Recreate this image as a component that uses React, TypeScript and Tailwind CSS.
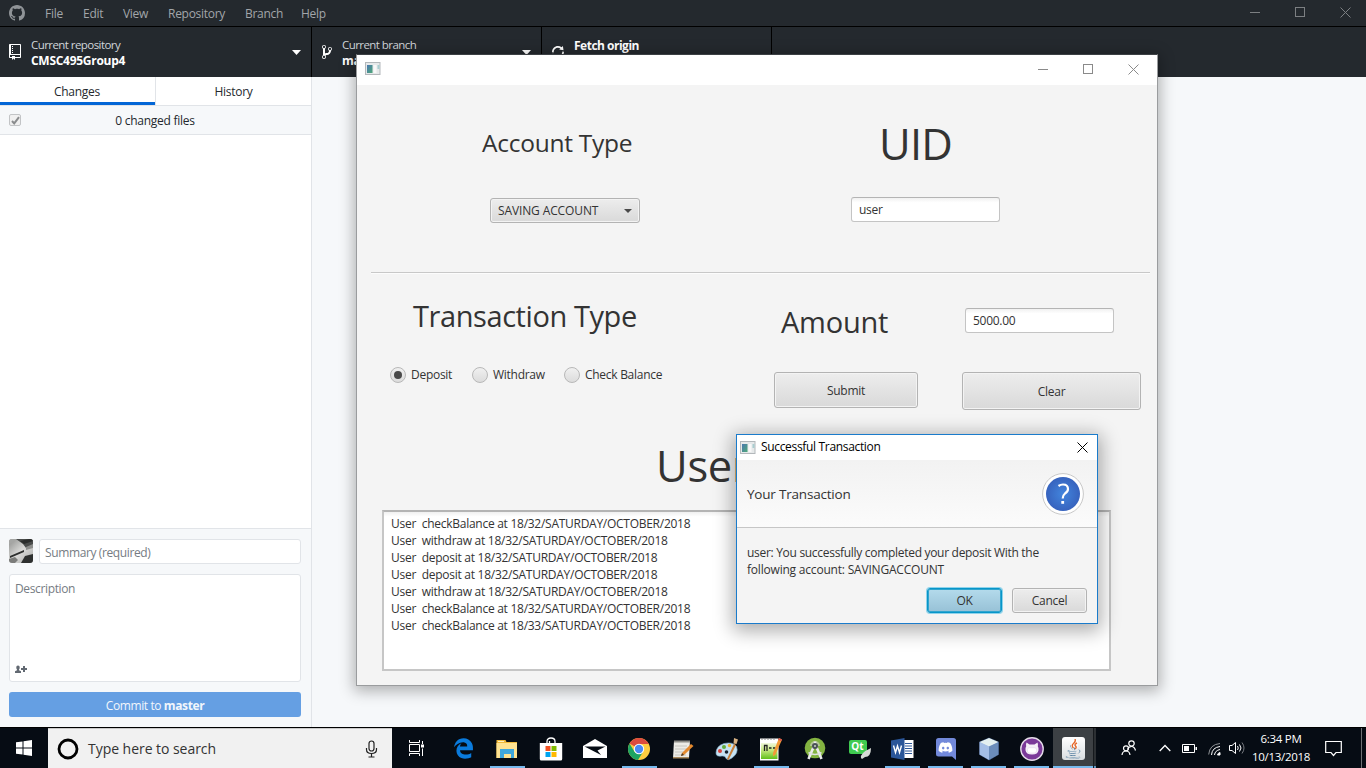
import React from 'react';
import { FaEdgeLegacy, FaDiscord, FaJava } from 'react-icons/fa';

const OCTOCAT =
  'M8 0C3.58 0 0 3.58 0 8c0 3.54 2.29 6.53 5.47 7.59.4.07.55-.17.55-.38 0-.19-.01-.82-.01-1.49-2.01.37-2.53-.49-2.69-.94-.09-.23-.48-.94-.82-1.13-.28-.15-.68-.52-.01-.53.63-.01 1.08.58 1.23.82.72 1.21 1.87.87 2.33.66.07-.52.28-.87.51-1.07-1.78-.2-3.64-.89-3.64-3.95 0-.87.31-1.59.82-2.15-.08-.2-.36-1.02.08-2.12 0 0 .67-.21 2.2.82.64-.18 1.32-.27 2-.27.68 0 1.36.09 2 .27 1.53-1.04 2.2-.82 2.2-.82.44 1.1.16 1.92.08 2.12.51.56.82 1.27.82 2.15 0 3.07-1.87 3.75-3.65 3.95.29.25.54.73.54 1.48 0 1.07-.01 1.93-.01 2.2 0 .21.15.46.55.38A8.013 8.013 0 0 0 16 8c0-4.42-3.58-8-8-8z';

function WindowControls({ className }: { className: string }) {
  return (
    <div className={`flex items-center ${className}`}>
      <svg width="10" height="10" viewBox="0 0 10 10" stroke="currentColor" fill="none"><path d="M0 5.5h10" /></svg>
      <svg width="10" height="10" viewBox="0 0 10 10" stroke="currentColor" fill="none"><rect x=".5" y=".5" width="9" height="9" /></svg>
      <svg width="11" height="11" viewBox="0 0 11 11" stroke="currentColor" fill="none"><path d="M.5.5l10 10M10.5.5l-10 10" /></svg>
    </div>
  );
}

function AppIcon() {
  return (
    <svg width="16" height="13" viewBox="0 0 16 13">
      <defs>
        <linearGradient id="frameFill" x1="0" y1="0" x2="1" y2="1">
          <stop offset="0" stopColor="#4a78b0" />
          <stop offset="1" stopColor="#4fa878" />
        </linearGradient>
      </defs>
      <rect x=".5" y=".5" width="14.500" height="12" fill="#e6e9ea" stroke="#b3b8bb" />
      <rect x="2" y="3" width="5.500" height="8" fill="url(#frameFill)" />
      <rect x="8.500" y="3" width="3" height="8" fill="#f8f8f8" />
      <rect x="12.500" y="3" width="2" height="4" fill="#a9cdd0" />
    </svg>
  );
}

function MenuBar() {
  return (
    <div className="flex h-[27px] items-center border-b border-black bg-[#24292e] text-[#a2a6aa]">
      <svg className="ml-[9px] text-[#8f9397]" width="16" height="16" viewBox="0 0 16 16" fill="currentColor"><path d={OCTOCAT} /></svg>
      <div className="ml-5 flex gap-5 pt-0.5 text-xs tracking-[-0.28px]">
        <span className="w-[18px]">File</span>
        <span className="w-5">Edit</span>
        <span className="w-[25px]">View</span>
        <span className="w-[57px]">Repository</span>
        <span className="w-9">Branch</span>
        <span>Help</span>
      </div>
      <WindowControls className="mr-[15px] ml-auto gap-[35px] pb-0.5 text-[#7c7f82]" />
    </div>
  );
}

function Caret() {
  return <svg width="9" height="5" viewBox="0 0 9 5" fill="currentColor"><path d="M0 0h9L4.5 5z" /></svg>;
}

function Toolbar() {
  return (
    <div className="flex h-[50px] bg-[#24292e] text-white">
      <div className="flex w-[312px] items-center border-r border-black pr-[10px] pl-[9px]">
        <svg width="12" height="16" viewBox="0 0 12 16" fill="currentColor">
          <path fillRule="evenodd" d="M4 9H3V8h1v1zm0-3H3v1h1V6zm0-2H3v1h1V4zm0-2H3v1h1V2zm8-1v12c0 .55-.45 1-1 1H6v2l-1.5-1.5L3 16v-2H1c-.55 0-1-.45-1-1V1c0-.55.45-1 1-1h10c.55 0 1 .45 1 1zm-1 10H1v2h2v-1h3v1h5v-2zm0-10H2v9h9V1z" />
        </svg>
        <div className="ml-[10px] flex-1 pt-0.5 leading-4">
          <div className="text-[11.500px] tracking-[-0.56px] text-[#d1d5da]">Current repository</div>
          <div className="text-xs font-bold tracking-[-0.28px]">CMSC495Group4</div>
        </div>
        <Caret />
      </div>
      <div className="flex w-[230px] items-center border-r border-black pr-[10px] pl-[10px]">
        <svg width="10" height="16" viewBox="0 0 10 16" fill="currentColor">
          <path fillRule="evenodd" d="M10 5c0-1.11-.89-2-2-2a1.993 1.993 0 0 0-1 3.72v.3c-.02.52-.23.98-.63 1.38-.4.4-.86.61-1.38.63-.83.02-1.48.16-2 .45V4.72a1.993 1.993 0 0 0-1-3.72C.88 1 0 1.89 0 3a2 2 0 0 0 1 1.72v6.56c-.59.35-1 .99-1 1.72 0 1.11.89 2 2 2 1.11 0 2-.89 2-2 0-.53-.2-1-.53-1.36.09-.06.48-.41.59-.47.25-.11.56-.17.94-.17 1.05-.05 1.95-.45 2.75-1.25S8.95 7.77 9 6.73h-.02C9.59 6.37 10 5.73 10 5zM2 1.8c.66 0 1.2.55 1.2 1.2 0 .65-.55 1.2-1.2 1.2C1.35 4.2.8 3.65.8 3c0-.65.55-1.2 1.2-1.2zm0 12.41c-.66 0-1.2-.55-1.2-1.2 0-.65.55-1.2 1.2-1.2.65 0 1.2.55 1.2 1.2 0 .65-.55 1.2-1.2 1.2zm6-8c-.66 0-1.2-.55-1.2-1.2 0-.65.55-1.2 1.2-1.2.65 0 1.2.55 1.2 1.2 0 .65-.55 1.2-1.2 1.2z" />
        </svg>
        <div className="ml-[10px] flex-1 pt-0.5 leading-4">
          <div className="text-[11.500px] tracking-[-0.56px] text-[#d1d5da]">Current branch</div>
          <div className="text-xs font-bold tracking-[-0.28px]">master</div>
        </div>
        <Caret />
      </div>
      <div className="flex w-[230px] items-center border-r border-black pl-[10px]">
        <svg width="12" height="16" viewBox="0 0 12 16" fill="currentColor">
          <path fillRule="evenodd" d="M10.24 7.4a4.15 4.15 0 0 1-1.2 3.6 4.346 4.346 0 0 1-5.41.54L4.8 10.4.5 9.8l.6 4.2 1.31-1.26c2.36 1.74 5.7 1.57 7.84-.54a5.876 5.876 0 0 0 1.74-4.46l-1.75-.34zM2.96 5a4.346 4.346 0 0 1 5.41-.54L7.2 5.6l4.3.6-.6-4.2-1.31 1.26c-2.36-1.74-5.7-1.57-7.85.54C.5 5.03-.06 6.65.01 8.26l1.75.35A4.17 4.17 0 0 1 2.96 5z" />
        </svg>
        <div className="ml-[10px] pt-1 leading-4">
          <div className="text-xs font-bold tracking-[-0.5px]">Fetch origin</div>
          <div className="text-[11px] text-[#d1d5da]">&nbsp;</div>
        </div>
      </div>
    </div>
  );
}

function Avatar() {
  return (
    <svg width="24" height="24" viewBox="0 0 24 24" className="rounded-[3px]">
      <defs>
        <linearGradient id="deskFill" x1="0" y1="0" x2="1" y2="1"><stop offset="0" stopColor="#8e8f8d" /><stop offset=".5" stopColor="#dadad8" /><stop offset="1" stopColor="#a9aaa8" /></linearGradient>
      </defs>
      <rect width="24" height="24" fill="url(#deskFill)" />
      <path d="M0 0h8L4 4 0 5z" fill="#a5a6a4" />
      <path d="M7 0h17v8l-7 1-3-4z" fill="#4a4c4b" />
      <path d="M11 2l9-2h4v2l-9 3z" fill="#2b2d2c" />
      <path d="M17 8l7-3v4l-7 2z" fill="#8d8e8c" />
      <path d="M1 17l14-6v2L1 19z" fill="#2d2f2e" />
      <path d="M12 24l4-7 8-2v9z" fill="#2e302f" />
      <path d="M0 24v-4l6-2 3 3-3 3z" fill="#7b7c7a" />
    </svg>
  );
}

function Sidebar() {
  return (
    <div className="flex w-[312px] flex-col border-r border-[#e1e4e8] bg-white text-xs tracking-[-0.26px] text-[#24292e]">
      <div className="flex h-[29px] border-b border-[#e1e4e8] text-center leading-[29px]">
        <div className="w-[155px] border-b-[3px] border-[#0366d6] pr-px">Changes</div>
        <div className="flex-1 border-l border-[#e1e4e8]">History</div>
      </div>
      <div className="flex h-[29px] items-center border-b border-[#e1e4e8] bg-[#f6f8fa] pl-[9px]">
        <div className="flex size-3 items-center justify-center rounded-[2px] border border-[#c2c4c6] bg-[#f0f0f0]">
          <svg width="9" height="9" viewBox="0 0 9 9" fill="none" stroke="#8a8c8e" strokeWidth="2"><path d="M1 5l2.2 2.4L8 1.2" /></svg>
        </div>
        <div className="flex-1 pt-0.5 pr-[22px] text-center">0 changed files</div>
      </div>
      <div className="flex-1" />
      <div className="h-[199px] border-t border-[#e1e4e8] bg-[#f6f8fa] px-[9px] pt-[10px] text-[#767c83]">
        <div className="flex w-[292px] gap-1.5">
          <Avatar />
          <div className="h-[25px] flex-1 rounded-[3px] border border-[#e1e4e8] bg-white pl-[5px] leading-[26px] tracking-[-0.38px]">Summary (required)</div>
        </div>
        <div className="mt-[10px] flex h-[108px] w-[292px] flex-col justify-between rounded-[3px] border border-[#e1e4e8] bg-white px-[5px] pt-[5px] pb-[7px]">
          <div className="leading-[18px] tracking-[-0.36px]">Description</div>
          <svg width="13" height="9" viewBox="0 0 13 9" fill="#626972">
            <path d="M3 .5C4.200 .5 4.700 1.400 4.700 2.500S4.300 4.200 4 4.600v.7l2 .9V8H0V6.200l2-.9v-.7C1.700 4.200 1.300 3.600 1.300 2.500S1.800.5 3 .5z" />
            <path d="M8 1h2v2h2v2h-2v2H8V5H6V3h2z" />
          </svg>
        </div>
        <div className="mt-[10px] h-[25px] w-[292px] rounded-[3px] bg-[#659fe3] text-center leading-[27px] tracking-[-0.4px] text-[#f1f6fc]">Commit to <b>master</b></div>
      </div>
    </div>
  );
}

function TextInput({ children }: { children: React.ReactNode }) {
  return (
    <div className="h-[25px] w-[149px] rounded-[3px] border border-[#c4c4c4] border-t-[#b4b4b4] bg-white bg-linear-to-b from-[#f1f1f1] to-white to-20% pl-[7px] text-xs leading-[24px] tracking-[-0.28px]">{children}</div>
  );
}

function FxButton({ className, children }: { className: string; children: React.ReactNode }) {
  return (
    <div className={`flex items-center justify-center rounded-[3px] border border-[#b3b3b3] bg-linear-to-b from-[#ededed] to-[#d9d9d9] text-xs tracking-[-0.26px] shadow-[inset_0_0_0_1px_#f3f3f3] ${className}`}>{children}</div>
  );
}

function Radio({ label, checked, className }: { label: string; checked?: boolean; className: string }) {
  return (
    <div className={`flex items-center gap-[5px] ${className}`}>
      <div className="flex size-4 items-center justify-center rounded-full border border-[#b8b8b8] bg-linear-to-b from-[#f0f0f0] to-[#dcdcdc]">
        {checked && <div className="size-2 rounded-full bg-[#4a4a4a]" />}
      </div>
      <span className="whitespace-nowrap">{label}</span>
    </div>
  );
}

const LOG = [
  'User  checkBalance at 18/32/SATURDAY/OCTOBER/2018',
  'User  withdraw at 18/32/SATURDAY/OCTOBER/2018',
  'User  deposit at 18/32/SATURDAY/OCTOBER/2018',
  'User  deposit at 18/32/SATURDAY/OCTOBER/2018',
  'User  withdraw at 18/32/SATURDAY/OCTOBER/2018',
  'User  checkBalance at 18/32/SATURDAY/OCTOBER/2018',
  'User  checkBalance at 18/33/SATURDAY/OCTOBER/2018',
];

function BankWindow() {
  return (
    <div className="absolute top-[54px] left-[356px] flex h-[632px] w-[802px] flex-col border border-[#9a9c9e] border-t-[#3c4044] bg-[#f4f4f4] text-[#333] shadow-[0_3px_14px_2px_rgba(0,0,0,0.3)]">
      <div className="flex h-[30px] items-center bg-white pl-2">
        <div className="pb-[3px]"><AppIcon /></div>
        <WindowControls className="mr-[18px] ml-auto gap-[35px] pb-0.5 text-[#8a8a8a]" />
      </div>
      <div className="flex h-[187px]">
        <div className="w-[400px]">
          <div className="mt-[42px] ml-[125px] h-[31px] text-[24.500px] leading-[32px] tracking-[-0.26px]">Account Type</div>
          <div className="mt-10 ml-[133px] flex h-[25px] w-[150px] items-center justify-between rounded-[3px] border border-[#b3b3b3] bg-linear-to-b from-[#ededed] to-[#d9d9d9] pr-[7px] pl-[7px] text-xs tracking-[-0.12px] shadow-[inset_0_0_0_1px_#f3f3f3]">
            SAVING ACCOUNT
            <svg width="8" height="4" viewBox="0 0 8 4" fill="#4a4a4a"><path d="M0 0h8L4 4z" /></svg>
          </div>
        </div>
        <div className="flex-1">
          <div className="mt-[29px] ml-[122px] h-[59px] text-[43.5px] leading-[60px] tracking-[-0.8px]">UID</div>
          <div className="mt-6 ml-[94px]"><TextInput>user</TextInput></div>
        </div>
      </div>
      <div className="ml-[14px] h-0.5 w-[779px] border-b border-[#fcfcfc] bg-[#c8c8c8]" />
      <div className="flex h-[161px]">
        <div className="w-[400px]">
          <div className="mt-[22px] ml-14 h-10 text-[29px] leading-[40px] tracking-[-0.42px]">Transaction Type</div>
          <div className="mt-[30px] ml-[33px] flex h-[18px] text-xs tracking-[-0.28px]">
            <Radio label="Deposit" checked className="w-[82px]" />
            <Radio label="Withdraw" className="w-[92px]" />
            <Radio label="Check Balance" className="" />
          </div>
        </div>
        <div className="flex-1">
          <div className="flex h-[98px]">
            <div className="mt-[28px] ml-6 h-10 w-[184px] text-[29px] leading-[40px] tracking-[-0.25px]">Amount</div>
            <div className="mt-[34px]"><TextInput>5000.00</TextInput></div>
          </div>
          <div className="ml-[17px] flex gap-11">
            <FxButton className="h-9 w-[144px] pt-0.5">Submit</FxButton>
            <FxButton className="h-[38px] w-[179px] pt-0.5">Clear</FxButton>
          </div>
        </div>
      </div>
      <div className="ml-[299px] h-[75px] text-[43.5px] leading-[62px] tracking-[-0.3px]">User</div>
      <div className="ml-[25px] h-[161px] w-[729px] border-2 border-[#c6c6c6] border-t-[#b4b4b4] bg-white bg-linear-to-b from-[#f0f0f0] to-white to-3% pt-[3px] pl-[7px]">
        {LOG.map((line, i) => (
          <div key={i} className="h-[17px] text-xs leading-[17px] tracking-[-0.27px] whitespace-pre">{line}</div>
        ))}
      </div>
    </div>
  );
}

function Dialog() {
  return (
    <div className="absolute top-[434px] left-[736px] flex h-[190px] w-[362px] flex-col border border-[#1a7bcb] bg-[#f4f4f4] text-xs tracking-[-0.26px] text-[#333] shadow-[0_4px_18px_3px_rgba(0,0,0,0.33)]">
      <div className="flex h-[25px] items-center bg-white pl-[3px] text-black">
        <AppIcon />
        <span className="ml-[5px] pb-px tracking-[-0.33px]">Successful Transaction</span>
        <svg className="mr-[9px] ml-auto mb-px" width="11" height="11" viewBox="0 0 11 11" stroke="#000" fill="none"><path d="M.5.5l10 10M10.5.5l-10 10" /></svg>
      </div>
      <div className="flex h-[68px] items-center justify-between border-b border-[#c6c6c6] bg-linear-to-b from-[#f2f2f2] to-[#fbfbfb] pr-[13px] pl-[10px] text-[13.500px] tracking-[-0.2px]">
        <span className="pt-px">Your Transaction</span>
        <svg width="42" height="42" viewBox="0 0 42 42">
          <defs>
            <radialGradient id="helpFill">
              <stop offset="0" stopColor="#4285dd" />
              <stop offset="1" stopColor="#3763be" />
            </radialGradient>
          </defs>
          <circle cx="21" cy="21" r="20.400" fill="#fff" stroke="#c8c8c8" />
          <circle cx="21" cy="21" r="17" fill="url(#helpFill)" />
          <path d="M16.500 13Q18.500 11.500 21 11.500Q26 11.500 26 16Q26 18.500 23 20.500Q20.700 22.300 20.700 25.500" fill="none" stroke="#fff" strokeWidth="2.200" />
          <rect x="19.300" y="28" width="2.800" height="2.800" fill="#fff" />
        </svg>
      </div>
      <div className="mt-4 ml-[10px] leading-[17px]">
        <div className="tracking-[-0.3px]">user: You successfully completed your deposit With the</div>
        <div className="tracking-[-0.2px]">following account: SAVINGACCOUNT</div>
      </div>
      <div className="mt-[10px] flex justify-end gap-[10px] pr-[10px]">
        <div className="flex h-[25px] w-[75px] items-center justify-center rounded-[3px] border border-[#0795c9] bg-linear-to-b from-[#b4dbec] to-[#97c1d6] shadow-[0_0_0_1px_#8fd3ea,inset_0_0_0_1px_#30a5cf]">OK</div>
        <FxButton className="h-[25px] w-[75px]">Cancel</FxButton>
      </div>
    </div>
  );
}

const ExplorerIcon = () => (
  <svg width="24" height="24" viewBox="0 0 24 24">
    <path d="M1.500 3h9l1 2h10.500v16H1.500z" fill="#f0b93a" />
    <path d="M1.500 6H22v15H1.500z" fill="#ffe391" />
    <path d="M5 12h14v9h-3v-4H9v4H5z" fill="#3fa7dc" />
    <path d="M3 4h6v1H3z" fill="#fff3c4" />
  </svg>
);
const StoreIcon = () => (
  <svg width="24" height="24" viewBox="0 0 24 24">
    <path d="M8 7V4.500Q8 1 12 1t4 3.500V7M10.500 6V4" fill="none" stroke="#fff" strokeWidth="1.300" />
    <path d="M.8 6h22.400v16q0 1.500-1.500 1.500H2.300Q.8 23.500.8 22z" fill="#fff" />
    <path d="M6.500 9h5v5h-5z" fill="#f25022" /><path d="M12.500 9h5v5h-5z" fill="#7fba00" />
    <path d="M6.500 15h5v5h-5z" fill="#00a4ef" /><path d="M12.500 15h5v5h-5z" fill="#ffb900" />
  </svg>
);
const MailIcon = () => (
  <svg width="24" height="20" viewBox="0 0 24 20">
    <path d="M0 7L12 0l12 7v12H0z" fill="#fff" />
    <path d="M1.500 7.500h21l-8 4 3.500 4.500z" fill="#060c14" />
  </svg>
);
const ChromeIcon = () => (
  <svg width="22" height="22" viewBox="0 0 22 22">
    <circle cx="11" cy="11" r="11" fill="#ffcd40" />
    <path d="M11 11L1.500 5.500A11 11 0 0 1 20.500 5.500L21 6H11z" fill="#dd4b3e" />
    <path d="M1.500 5.500A11 11 0 0 0 10 22l5.300-8.500L11 16 6.500 13.700z" fill="#1da462" />
    <circle cx="11" cy="11" r="5.200" fill="#fff" />
    <circle cx="11" cy="11" r="4.200" fill="#4a8af4" />
  </svg>
);
const NotesIcon = () => (
  <svg width="22" height="22" viewBox="0 0 22 22">
    <path d="M2 3h16l-1 17H1z" fill="#ecebe6" />
    <path d="M2 2.500h16v2H2z" fill="#8d8d88" />
    <path d="M3 8h12M3 11h12M3 14h11M3 17h11" stroke="#c6c6c0" />
    <path d="M1 19h16v1.500H1z" fill="#a98a5d" />
    <path d="M19 6l2.500 2L12 17l-3 1 1-3z" fill="#e58a2e" />
    <path d="M10 15l2 2-3 1z" fill="#4b3a29" />
  </svg>
);
const PaintIcon = () => (
  <svg width="24" height="24" viewBox="0 0 24 24">
    <path d="M1 16Q1 9 9 6.500q9-2 12.500 3Q24 16 17 21q-4 3-6 .5-.5-3-4-2.500Q1 20 1 16z" fill="#c6e2f2" stroke="#78a7c6" strokeWidth=".6" />
    <circle cx="5" cy="14" r="2" fill="#d8433b" /><circle cx="9" cy="10" r="2" fill="#63ad3c" /><circle cx="14.500" cy="8.500" r="1.700" fill="#f1b62f" />
    <circle cx="11.500" cy="15" r="1.800" fill="#16222e" />
    <path d="M19 7l2 1-7.500 15-1.500-1z" fill="#c8803b" />
    <path d="M19 1l4 1.500L21.500 7 18.500 6.500z" fill="#d8b384" />
  </svg>
);
const NppIcon = () => (
  <svg width="24" height="24" viewBox="0 0 24 24">
    <defs><linearGradient id="nppFill" x1="0" y1="0" x2="0" y2="1"><stop offset="0" stopColor="#f1f8dd" /><stop offset=".45" stopColor="#c4e67e" /><stop offset="1" stopColor="#62c01a" /></linearGradient></defs>
    <rect x="1" y="1.500" width="18.500" height="22" fill="#fff" />
    <path d="M3 1v2m3-2v2m3-2v2m3-2v2m3-2v2" stroke="#888" />
    <rect x="2" y="6" width="16.500" height="16" fill="url(#nppFill)" />
    <path d="M5.500 14V8.500h2.500V14M10 11h2.500m1.500 0h2.500" fill="none" stroke="#222" strokeWidth="1.300" />
    <path d="M20 1l3 1.500-6.500 15-2.500 2 0-3.500z" fill="#f29a38" />
    <path d="M20 1l3 1.500-.8 1.800-3-1.500z" fill="#d9564e" />
  </svg>
);
const StudioIcon = () => (
  <svg width="22" height="24" viewBox="0 0 22 24">
    <circle cx="11" cy="11" r="10.300" fill="#83b341" />
    <path d="M6 9a5 5 0 0 1 10 0z" fill="#b4c795" />
    <path d="M11 4.500v4M10 9L4.500 22M12 9l5.500 13" stroke="#ebecec" strokeWidth="2.600" />
    <path d="M4.500 15.500q6.500 4 13 0" fill="none" stroke="#dfe1e0" strokeWidth="1.600" />
    <circle cx="11" cy="9" r="3" fill="#4b5157" /><circle cx="11" cy="9" r="1" fill="#c9d5c0" />
  </svg>
);
const QtIcon = () => (
  <div className="relative h-[17px] w-[21px]">
    <div className="h-[14px] w-[18px] rounded-[2px] bg-[#3fca50] text-center text-[10px] leading-[13px] font-bold text-white">Qt</div>
    <svg className="absolute right-[-1px] bottom-[-2px]" width="11" height="11" viewBox="0 0 11 11"><path d="M11 0Q11 9 5 9L2 11 1 10Q0 5 11 0z" fill="#d7dad6" /></svg>
  </div>
);
const WordIcon = () => (
  <div className="flex h-[22px] items-center">
    <svg width="23" height="22" viewBox="0 0 23 22">
      <rect x="12" y="2" width="10.500" height="18" fill="#fff" />
      <path d="M14 5.500h7M14 8h7M14 10.500h7M14 13h7M14 15.500h7" stroke="#2a5699" />
      <path d="M0 2.500L13.500 0v22L0 19.500z" fill="#2a5699" />
      <path d="M2.500 7.500L4.500 14.500 6.500 8 8.500 14.500 10.500 7.500" fill="none" stroke="#fff" strokeWidth="1.400" />
    </svg>
  </div>
);
const DiscordIcon = () => (
  <div className="relative flex h-[22px] w-5 items-start justify-center">
    <svg className="absolute inset-0" width="20" height="22" viewBox="0 0 20 22"><path d="M2.500 0h15Q20 0 20 2.500V22l-4-3.500H2.500Q0 18.500 0 16V2.500Q0 0 2.500 0z" fill="#7289da" /></svg>
    <FaDiscord className="relative mt-[2px] text-white" size={15} />
  </div>
);
const CubeIcon = () => (
  <svg width="22" height="24" viewBox="0 0 22 24">
    <path d="M11 1l9.500 4v12.500L11 23l-9.500-5.500V5z" fill="#a9c4de" stroke="#24395e" strokeWidth="1" />
    <path d="M11 1l9.500 4L11 9.500 1.500 5z" fill="#e4f0f0" />
    <path d="M1.500 5L11 9.500V23l-9.500-5.500z" fill="#a5bfe6" />
    <path d="M20.500 5L11 9.500V23l9.500-5.500z" fill="#6a8cba" />
  </svg>
);
const GithubDesktopIcon = () => (
  <svg width="24" height="24" viewBox="0 0 24 24">
    <circle cx="12" cy="12" r="11.200" fill="#7b3a99" stroke="#e4dbe8" strokeWidth="1.400" />
    <path d="M6.500 5.500L9.500 7.500h5l3-2q.8 2 .3 3.800 1 1.500.7 4Q18 17.500 12 17.500T5.500 13.300q-.3-2.500.7-4Q5.700 7.500 6.500 5.500z" fill="#f5f0f7" />
    <path d="M9.500 16Q7 15.500 7.300 13t2.200-2.300h5Q16.500 10.700 16.700 13T14.500 16z" fill="#fff" stroke="#d9c9e2" strokeWidth=".4" />
  </svg>
);
const JavaIcon = () => (
  <div className="relative flex size-[23px] items-center justify-center rounded-[3px] bg-linear-to-b from-white to-[#d9dde0]">
    <FaJava className="text-[#5b84a4]" size={20} />
    <svg className="absolute top-[2px] left-[8px]" width="8" height="12" viewBox="0 0 8 12"><rect x="1" y="0" width="7" height="8.500" fill="#fcfcfc" /><path d="M5 0Q6 2.500 3.500 4.500T3.500 9M7 4Q4 5.500 5.500 7T5 10" fill="none" stroke="#e5682b" strokeWidth="1.400" /></svg>
  </div>
);

const WIDE = 'w-11';
const NARROW = 'w-[43px]';
const TASKS: { icon: React.ReactNode; width: string; open?: boolean; active?: boolean }[] = [
  { icon: <FaEdgeLegacy className="text-[#0a7bdd]" size={21} />, width: WIDE },
  { icon: <ExplorerIcon />, width: WIDE, open: true },
  { icon: <StoreIcon />, width: WIDE },
  { icon: <MailIcon />, width: WIDE },
  { icon: <ChromeIcon />, width: WIDE, open: true },
  { icon: <NotesIcon />, width: WIDE },
  { icon: <PaintIcon />, width: WIDE },
  { icon: <NppIcon />, width: WIDE, open: true },
  { icon: <StudioIcon />, width: WIDE },
  { icon: <QtIcon />, width: WIDE },
  { icon: <WordIcon />, width: NARROW, open: true },
  { icon: <DiscordIcon />, width: NARROW, open: true },
  { icon: <CubeIcon />, width: NARROW, open: true },
  { icon: <GithubDesktopIcon />, width: NARROW, open: true },
  { icon: <JavaIcon />, width: 'w-10', active: true },
];

function Taskbar() {
  return (
    <div className="flex h-[41px] border-t border-black bg-[#060c14] text-white">
      <div className="flex w-12 items-center justify-center">
        <svg width="16" height="16" viewBox="0 0 16 16" fill="#fff"><path d="M0 2.300l6.500-.9v6.100H0zM7.500 1.200L16 0v7.500H7.500zM0 8.500h6.500v6.100L0 13.700zM7.500 8.500H16V16l-8.500-1.200z" /></svg>
      </div>
      <div className="flex w-[344px] items-center border-t border-[#c9c9c9] bg-[#f1f1f1] pl-[9px] text-[#333]">
        <svg width="22" height="22" viewBox="0 0 22 22"><circle cx="11" cy="11" r="9" fill="none" stroke="#000" strokeWidth="2.800" /></svg>
        <span className="ml-[9px] text-sm tracking-[-0.04px]">Type here to search</span>
        <svg className="mr-[14px] ml-auto" width="13" height="18" viewBox="0 0 13 18" fill="none" stroke="#222" strokeWidth="1.200">
          <rect x="4" y="1" width="5" height="10" rx="2.500" /><path d="M1.500 8v1.500Q1.500 13.500 6.500 13.500t5-4V8M6.500 13.500V17M3.500 17h6" />
        </svg>
      </div>
      <div className="flex w-[49px] items-center justify-center">
        <svg width="17" height="16" viewBox="0 0 17 16" fill="none" stroke="#fff" strokeWidth="1">
          <path d="M1.500 0v2.500h10V0M1.500 16v-2.500h10V16M1.500 4.500h10v7h-10zM14.500 1v3M14.500 8.500V16" /><path d="M13 4.500h3v3h-3z" fill="#fff" stroke="none" />
        </svg>
      </div>
      {TASKS.map((t, i) => (
        <div key={i} className={`flex flex-col items-center ${t.width} ${t.active ? 'bg-[#3c4044]' : ''}`}>
          <div className="flex h-[38px] items-center pt-[3px]">{t.icon}</div>
          {(t.open || t.active) && <div className={`h-0.5 bg-[#76b9ed] ${t.active ? 'w-full' : 'w-[35px]'}`} />}
        </div>
      ))}
      <div className="flex w-[3px] flex-col justify-end border-l border-[#15191d] bg-[#2b2f33]"><div className="h-0.5 bg-[#5c93bf]" /></div>
      <div className="flex flex-1 items-center">
        <svg className="ml-[25px]" width="16" height="16" viewBox="0 0 16 16" fill="none" stroke="#fff" strokeWidth="1.200">
          <circle cx="10.500" cy="3.500" r="2.700" /><path d="M6.500 9.500q1-3 4-3t4 4" /><circle cx="5" cy="8.300" r="2.500" /><path d="M1 15q.5-4 4-4t4 4" />
        </svg>
        <svg className="ml-[22px]" width="12" height="8" viewBox="0 0 12 8" fill="none" stroke="#fff" strokeWidth="1.300"><path d="M.7 7L6 1.500 11.300 7" /></svg>
        <svg className="ml-[11px]" width="16" height="9" viewBox="0 0 16 9"><path d="M.5.5h12v8H.5z" fill="none" stroke="#fff" /><path d="M2 2h5v5H2zM13.500 3h1.500v3h-1.500z" fill="#fff" /></svg>
        <svg className="mt-0.5 ml-[10px]" width="14" height="14" viewBox="0 0 14 14" fill="none" stroke="#fff" strokeWidth="1">
          <path d="M.7 12.500Q1.500 2.500 12 1.500" stroke="#8f9296" /><path d="M3.500 13Q4 5.500 12 4.500M6.500 13Q7 8.500 12 7.500" /><path d="M9.500 13q.3-2 2.500-2.500V13z" fill="#fff" />
        </svg>
        <svg className="ml-[7px]" width="17" height="14" viewBox="0 0 17 14" fill="none" stroke="#fff" strokeWidth="1">
          <path d="M.5 4.500H3L6.500 1.500v11L3 9.500H.5z" /><path d="M8.500 5q1.500 2 0 4M10.500 3.500q3 3.500 0 7" /><path d="M13 1.500q4 5.500 0 11" stroke="#777b80" />
        </svg>
        <div className="ml-1 w-[62px] pb-px text-center text-[11.5px] leading-[18px] tracking-[-0.3px]">
          <div>6:34 PM</div>
          <div>10/13/2018</div>
        </div>
        <svg className="ml-[13px]" width="17" height="17" viewBox="0 0 17 17" fill="none" stroke="#fff" strokeWidth="1.200"><path d="M.7 1.500h15.600v11H11L8.500 15.500 6 12.500H.7z" /></svg>
        <div className="mr-1 ml-auto h-full w-px bg-[#6d7175]" />
      </div>
    </div>
  );
}

export default function App() {
  return (
    <div className="relative flex h-[768px] w-[1366px] flex-col overflow-hidden bg-[#f6f8fa] font-['Open_Sans','Noto_Sans',sans-serif]">
      <MenuBar />
      <Toolbar />
      <div className="flex flex-1">
        <Sidebar />
        <div className="flex-1" />
      </div>
      <BankWindow />
      <Dialog />
      <Taskbar />
    </div>
  );
}
